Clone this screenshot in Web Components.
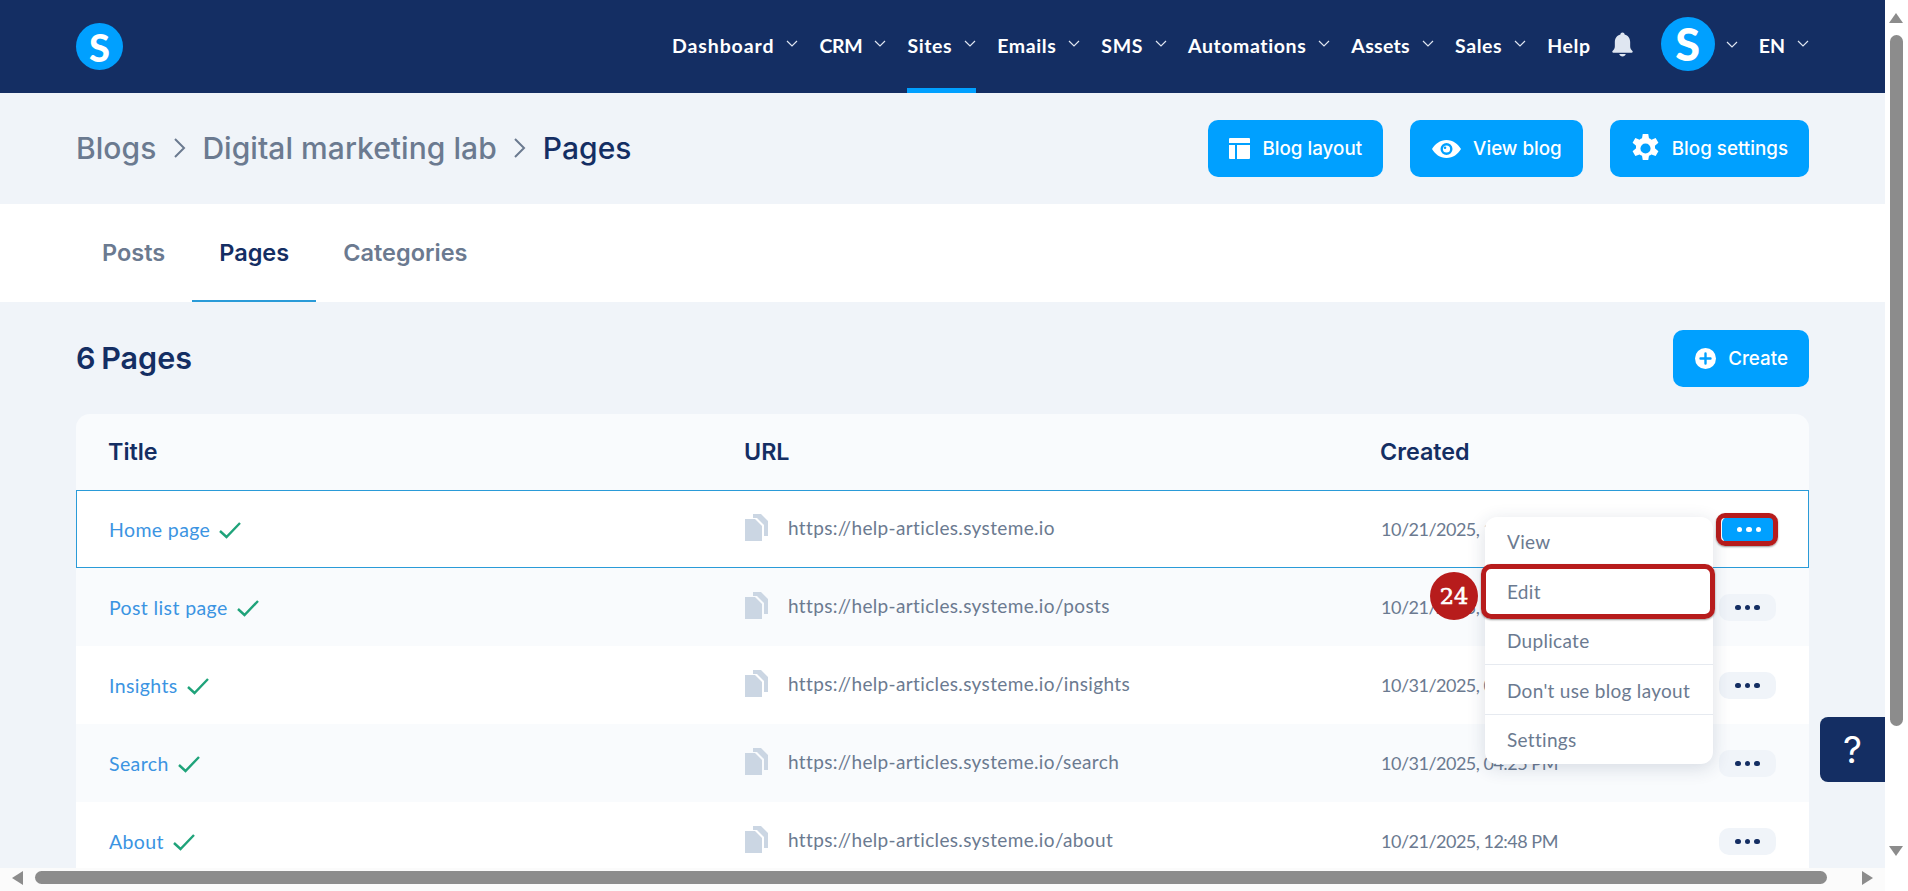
<!DOCTYPE html>
<html lang="en"><head><meta charset="utf-8"><title>Pages</title>
<style>
html,body{margin:0;height:891px;overflow:hidden;background:#fff;font-family:"Lato",sans-serif}
</style></head>
<body>
<app-shell>
  <app-header></app-header>
  <page-title></page-title>
  <tab-bar></tab-bar>
  <list-head></list-head>
  <page-table>
    <page-row active name="Home page" url="https://help-articles.systeme.io" date="10/21/2025, 12:48 PM"></page-row>
    <page-row alt name="Post list page" url="https://help-articles.systeme.io/posts" date="10/21/2025, 12:48 PM"></page-row>
    <page-row name="Insights" url="https://help-articles.systeme.io/insights" date="10/31/2025, 04:25 PM"></page-row>
    <page-row alt name="Search" url="https://help-articles.systeme.io/search" date="10/31/2025, 04:25 PM"></page-row>
    <page-row name="About" url="https://help-articles.systeme.io/about" date="10/21/2025, 12:48 PM"></page-row>
  </page-table>
  <action-menu slot="overlay"></action-menu>
  <step-marker slot="overlay"></step-marker>
  <help-tab slot="overlay"></help-tab>
</app-shell>
<script>
const chev='<svg width="12" height="7" viewBox="0 0 12 7" fill="none" stroke="currentColor" stroke-width="1.2"><path d="M1 1l5 5 5-5"/></svg>';
function def(name,css,html){
  customElements.define(name,class extends HTMLElement{
    connectedCallback(){
      if(this.shadowRoot)return;
      const s=this.attachShadow({mode:'open'});
      s.innerHTML='<style>'+css+'</style>'+(typeof html==='function'?html(this):html);
    }
  });
}
def('app-shell',`
:host{display:grid;grid-template-columns:1885px 23px;grid-template-rows:868px 23px;width:1908px;height:891px;font-family:"Lato",sans-serif}
.main{grid-area:1/1;position:relative;overflow:hidden;background:#f0f4f9;display:flex;flex-direction:column}
.v{grid-area:1/2/3/3;background:#fff;display:flex;flex-direction:column;padding:13px 0 0;box-sizing:border-box}
.v i{display:block;margin-left:4px;flex:none}
.up{width:0;height:0;border-left:7px solid transparent;border-right:7px solid transparent;border-bottom:10px solid #8c8c8c}
.v .thumb{width:13px;margin-left:5px;height:691px;margin-top:12px;background:#8c8c8c;border-radius:7px}
.dn{width:0;height:0;border-left:7px solid transparent;border-right:7px solid transparent;border-top:10px solid #8c8c8c;margin-top:120px}
.h{grid-area:2/1;background:#fbfbfb;display:flex;align-items:center;padding:0 0 4px 12px;box-sizing:border-box}
.h i{display:block;flex:none}
.l{width:0;height:0;border-top:7px solid transparent;border-bottom:7px solid transparent;border-right:11px solid #8c8c8c}
.r{width:0;height:0;border-top:7px solid transparent;border-bottom:7px solid transparent;border-left:11px solid #8c8c8c;margin-left:35px}
.ht{width:1792px;height:13px;background:#8c8c8c;border-radius:7px;margin-left:12px}
`,`<div class="main"><slot></slot><slot name="overlay"></slot></div>
<div class="v"><i class="up"></i><i class="thumb"></i><i class="dn"></i></div>
<div class="h"><i class="l"></i><i class="ht"></i><i class="r"></i></div>`);

def('nav-item',`
:host{display:flex;align-items:center;height:93px;box-sizing:border-box;gap:12px;color:#fff;font:700 19.5px "Lato",sans-serif;letter-spacing:.6px;position:relative;white-space:nowrap;padding-bottom:3px}
:host([on])::after{content:"";position:absolute;left:0;right:0;bottom:0;height:5px;background:#00a0ff}
svg{color:#dfe6f1;margin-top:-4px}
`,h=>`<span>${h.getAttribute('label')}</span>${h.hasAttribute('plain')?'':chev}`);

def('brand-mark',`
:host{display:flex;align-items:center;justify-content:center;border-radius:50%;background:#00a0ff;color:#fff;font:900 38px "Lato",sans-serif;width:47px;height:47px}
:host([big]){width:54px;height:54px;font-size:45px}
`,'<span>S</span>');

def('app-header',`
:host{display:flex;align-items:center;height:93px;flex:none;background:#142e63;padding:0 76px;width:1885px;box-sizing:border-box}
nav{margin-left:auto;display:flex;align-items:center;gap:21px}
.bell{margin:-4px 0 0 -1px;display:block}
.user{display:flex;align-items:center;gap:11px;color:#dfe6f1;margin-left:6px;margin-top:-5px}
.user svg{margin-top:0}
`,`<brand-mark></brand-mark><nav>
<nav-item label="Dashboard" style="letter-spacing:.9px"></nav-item><nav-item label="CRM" style="letter-spacing:-.3px"></nav-item><nav-item label="Sites" on></nav-item><nav-item label="Emails"></nav-item><nav-item label="SMS"></nav-item><nav-item label="Automations"></nav-item><nav-item label="Assets" style="letter-spacing:.3px"></nav-item><nav-item label="Sales"></nav-item><nav-item label="Help" plain></nav-item>
<svg class="bell" width="23" height="25" viewBox="0 0 24 25" fill="#dfe6f1"><path d="M12 0c1.3 0 2.2.9 2.2 2.1 3.7.9 5.8 3.9 5.8 7.9v4.2c0 2.2 1 3.7 2.4 5 .6.6.2 1.8-.8 1.8H2.400c-1 0-1.400-1.200-.8-1.800 1.400-1.300 2.400-2.800 2.400-5V10c0-4 2.100-7 5.800-7.900C9.800.9 10.700 0 12 0z"/><path d="M8.600 22.500h6.800C15 24 13.700 25 12 25s-3-1-3.400-2.500z"/></svg>
<div class="user"><brand-mark big></brand-mark>${chev}</div>
<nav-item label="EN" style="letter-spacing:0"></nav-item>
</nav>`);

def('action-button',`
:host{display:inline-flex;align-items:center;gap:12px;height:57px;padding:0 21px;box-sizing:border-box;border-radius:10px;background:#00a0ff;color:#fff;font:500 18.800px "Inter",sans-serif;white-space:nowrap}
::slotted(svg){display:block;flex:none}
`,'<slot name="icon"></slot><slot></slot>');

def('page-title',`
:host{display:flex;align-items:center;height:111px;flex:none;padding:0 76px;box-sizing:border-box;justify-content:space-between}
.crumbs{display:flex;align-items:center;font:500 30px "Inter",sans-serif;letter-spacing:.05px;color:#6b7a90;gap:16.500px;white-space:nowrap;margin-top:-2px}
.crumbs b{font-weight:500;color:#142e63}
.btns{display:flex;gap:27px}
`,`<div class="crumbs"><span>Blogs</span><svg width="13" height="22" viewBox="0 0 13 22" fill="none" stroke="#6b7a90" stroke-width="2"><path d="M2 2l9 9-9 9"/></svg><span>Digital marketing lab</span><svg width="13" height="22" viewBox="0 0 13 22" fill="none" stroke="#6b7a90" stroke-width="2"><path d="M2 2l9 9-9 9"/></svg><b>Pages</b></div>
<div class="btns">
<action-button><svg slot="icon" width="21" height="21" viewBox="0 0 21 21" fill="#fff"><path d="M0 1a1 1 0 0 1 1-1h19a1 1 0 0 1 1 1v4H0zM0 7h6v14H1a1 1 0 0 1-1-1zM8 7h13v13a1 1 0 0 1-1 1H8z"/></svg>Blog layout</action-button>
<action-button style="padding-left:22px"><svg slot="icon" width="29" height="18" viewBox="0 0 29 18"><path fill="#fff" fill-rule="evenodd" d="M14.500 0C21 0 26 4 29 9c-3 5-8 9-14.500 9S3 14 0 9c3-5 8-9 14.500-9zm0 3a6 6 0 1 0 0 12 6 6 0 0 0 0-12z"/><circle cx="14.500" cy="9" r="3.600" fill="#fff"/><circle cx="13" cy="7.800" r="1.300" fill="#00a0ff"/></svg>View blog</action-button>
<action-button style="padding-left:21px;gap:12px"><svg slot="icon" width="29" height="29" viewBox="2 2 20 20"><path fill="#fff" fill-rule="evenodd" d="M13.900 1l.5 3c.6.2 1.200.5 1.700.9l2.900-1.100 1.900 3.300-2.400 2c.1.600.1 1.200 0 1.800l2.400 2-1.900 3.300-2.900-1.100c-.5.4-1.100.7-1.700.9l-.5 3h-3.800l-.5-3c-.6-.2-1.200-.5-1.700-.9L5 16.200l-1.900-3.300 2.400-2c-.1-.6-.1-1.200 0-1.800l-2.400-2L5 3.800l2.900 1.100c.5-.4 1.100-.7 1.700-.9l.5-3zM12 7.500a3.500 3.500 0 1 0 0 7 3.500 3.500 0 0 0 0-7z" transform="translate(0 1)"/></svg>Blog settings</action-button>
</div>`);

def('tab-bar',`
:host{display:flex;height:98px;flex:none;background:#fff;padding-left:76px;box-sizing:border-box;font:600 23.500px "Inter",sans-serif;color:#6b7a90}
a{display:flex;align-items:center;padding:0 27px;box-sizing:border-box;height:98px;border-bottom:2px solid transparent}
a.on{color:#142e63;border-bottom-color:#2a9bd8}
`,`<a style="padding-left:26px">Posts</a><a class="on">Pages</a><a>Categories</a>`);

def('list-head',`
:host{display:flex;align-items:center;justify-content:space-between;flex:none;height:112px;padding:0 76px;box-sizing:border-box;font:600 30.500px "Inter",sans-serif;word-spacing:-2px;color:#142e63}
span{margin-top:-2px}
`,`<span>6 Pages</span><action-button style="padding:0 21px 0 22px;gap:12px;word-spacing:0"><svg slot="icon" width="21" height="21" viewBox="0 0 21 21"><circle cx="10.500" cy="10.500" r="10.500" fill="#fff"/><path d="M10.500 5.500v10M5.500 10.500h10" stroke="#00a0ff" stroke-width="2.400" stroke-linecap="round"/></svg>Create</action-button>`);

def('page-table',`
:host{display:block;flex:none;margin:0 76px;width:1733px;background:#f9fbfd;border-radius:14px 14px 0 0}
.head{display:grid;grid-template-columns:636px 636px 1fr;height:76px;align-items:center;padding-left:32px;font:600 23.300px "Inter",sans-serif;color:#142e63}
span{margin-top:-1px}
`,`<div class="head"><span>Title</span><span>URL</span><span>Created</span></div><slot></slot>`);

def('dots-button',`
:host{display:flex;align-items:center;justify-content:center;gap:4px;width:57px;height:27px;border-radius:10px;background:#f0f4f9}
i{width:5.500px;height:5.500px;border-radius:50%;background:#142e63}
:host([on]){background:#00a0ff;width:54px;height:25px;border-radius:6px;margin-left:3px}
:host([on]) i{background:#fff}
`,'<i></i><i></i><i></i>');

def('page-row',`
:host{display:grid;grid-template-columns:636px 636px 1fr 57px;align-items:center;height:78px;padding:0 33px 0 33px;box-sizing:border-box;background:#fff;font:400 19px "Lato",sans-serif;color:#6b7a90;position:relative;white-space:nowrap}
:host([alt]){background:#f9fbfd}
:host([active]){box-shadow:inset 0 0 0 1px #2a9bd8;background:#fff}
.t{display:flex;align-items:center;gap:8px;color:#3b94e2;margin-top:1px;font-size:19.500px}
.t span{letter-spacing:.38px}
.u{display:flex;align-items:center;gap:20px;margin-top:-3px;letter-spacing:.35px}
.d{font-size:18px;letter-spacing:-.5px}
dots-button{margin-top:1px;justify-self:end}
`,h=>`<div class="t"><span>${h.getAttribute('name')}</span><svg width="24" height="18" viewBox="0 0 24 18" fill="none" stroke="#1fa37a" stroke-width="2.400"><path d="M2 10l6.500 6L22 2"/></svg></div>
<div class="u"><svg width="23" height="27" viewBox="0 0 23 27"><path fill="#cbd6e3" d="M0 5h10l7 7v15H0z"/><path fill="#cbd6e3" d="M8 0h8l7 7v15h-4V11l-7-7H8z"/></svg><span>${h.getAttribute('url')}</span></div>
<div class="d">${h.getAttribute('date')}</div><dots-button ${h.hasAttribute('active')?'on':''}></dots-button>`+(h.hasAttribute('active')?'<mark-box></mark-box>':''));

def('mark-box',`
:host{position:absolute;left:1640px;top:23px;width:62px;height:33px;box-sizing:border-box;border:5px solid #b71c1c;border-radius:9px;box-shadow:0 1px 2px rgba(0,0,0,.4)}
`,'');

def('action-menu',`
:host{position:absolute;left:1485px;top:517px;width:228px;height:247px;background:#fff;border-radius:12px;box-shadow:0 4px 18px rgba(30,50,90,.16);font:400 19px "Lato",sans-serif;color:#6b7a90;display:flex;flex-direction:column}
a{height:49.400px;display:flex;align-items:center;padding-left:22px;box-sizing:border-box;flex:none;letter-spacing:.3px}
a.s{border-bottom:1px solid #e6eaf0;padding-top:2px}
.ring{position:absolute;left:-4px;top:47px;width:234px;height:55px;box-sizing:border-box;border:5px solid #b71c1c;border-radius:10px;box-shadow:0 1px 2px rgba(0,0,0,.4)}
`,`<a>View</a><a>Edit</a><a class="s">Duplicate</a><a class="s">Don't use blog layout</a><a>Settings</a><div class="ring"></div>`);

def('step-marker',`
:host{position:absolute;left:1430px;top:572px;width:48px;height:48px;border-radius:50%;background:#b71c1c;color:#fff;font:400 22.500px "DejaVu Serif",serif;-webkit-text-stroke:.6px #fff;display:flex;align-items:center;justify-content:center}
`,'<span>24</span>');

def('help-tab',`
:host{position:absolute;left:1820px;top:717px;width:65px;height:65px;border-radius:8px 0 0 8px;background:#142e63;color:#fff;font:400 37px "Inter",sans-serif;display:flex;align-items:center;justify-content:center}
`,'<span>?</span>');
</script>
</body></html>
